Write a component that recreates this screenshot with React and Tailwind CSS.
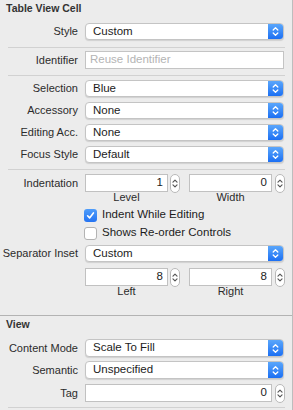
import React from 'react';

const Chevrons = ({ color = 'white', w = 9, h = 13 }) => (
  <svg width={w} height={h} viewBox="0 0 9 13" fill="none">
    <path d="M2.2 5 L4.5 2.7 L6.8 5" stroke={color} strokeWidth="1.3" strokeLinecap="round" strokeLinejoin="round" />
    <path d="M2.2 8 L4.5 10.3 L6.8 8" stroke={color} strokeWidth="1.3" strokeLinecap="round" strokeLinejoin="round" />
  </svg>
);

const Label = ({ children }) => (
  <div className="w-[79px] shrink-0 text-right text-[11px] text-[#2b2b2b] pr-[1px]">{children}</div>
);

const Popup = ({ label, value, h = 'h-[17px]', mt }) => (
  <div className={`flex items-center ${h} ${mt}`}>
    <Label>{label}</Label>
    <div className="ml-[6px] w-[199px] h-full flex bg-white rounded-[4px] border border-[#c4c4c4] shadow-[0_1px_1px_rgba(0,0,0,0.12)] overflow-hidden">
      <div className="flex-1 flex items-center pl-[7px] text-[11.5px] text-[#1c1c1c]">{value}</div>
      <div className="w-[15px] flex items-center justify-center bg-gradient-to-b from-[#5aa6fb] to-[#1b6ff3]">
        <Chevrons />
      </div>
    </div>
  </div>
);

const Stepper = () => (
  <div className="w-[10px] h-[19px] rounded-full border border-[#b9b9b9] bg-white flex items-center justify-center">
    <Chevrons color="#555" w={8} h={13} />
  </div>
);

const NumField = ({ value, w = 'w-[83px]' }) => (
  <div className={`${w} h-full bg-white border border-[#c1c1c1] flex items-center justify-end pr-[4px] text-[11.5px] text-[#1c1c1c]`}>
    {value}
  </div>
);

const Sep = ({ mt }) => <div className={`${mt} ml-[8px] w-[277px] h-px bg-[#d1d1d1]`} />;

const Check = ({ checked, text }) => (
  <div className="flex items-center h-[18px] pl-[84px]">
    {checked ? (
      <div className="w-[13px] h-[13px] rounded-[3px] bg-gradient-to-b from-[#4f9dfa] to-[#2473f2] flex items-center justify-center">
        <svg width="9" height="9" viewBox="0 0 9 9" fill="none">
          <path d="M1.6 4.8 L3.6 6.9 L7.4 1.9" stroke="white" strokeWidth="1.6" strokeLinecap="round" strokeLinejoin="round" />
        </svg>
      </div>
    ) : (
      <div className="w-[13px] h-[13px] rounded-[3px] bg-white border border-[#b3b3b3]" />
    )}
    <span className="ml-[5px] text-[11.5px] text-[#1c1c1c]">{text}</span>
  </div>
);

export default function App() {
  return (
    <div
      className="w-[293px] h-[410px] bg-[#ececec] overflow-hidden border-r border-[#bdbdbd] flex flex-col"
      style={{ fontFamily: '"Liberation Sans", Arial, sans-serif' }}
    >
      <div className="h-[18px] flex items-center pl-[6px] text-[10.5px] font-bold text-[#333]">Table View Cell</div>
      <Popup label="Style" value="Custom" mt="mt-[5px]" />
      <Sep mt="mt-[7px]" />

      <div className="flex items-center h-[18px] mt-[3px]">
        <Label>Identifier</Label>
        <div className="ml-[6px] w-[199px] h-full bg-white border border-[#c4c4c4] flex items-center pl-[4px] text-[11.5px] text-[#b4b4b4]">
          Reuse Identifier
        </div>
      </div>
      <Sep mt="mt-[6px]" />

      <Popup label="Selection" value="Blue" mt="mt-[4px]" />
      <Popup label="Accessory" value="None" mt="mt-[5px]" />
      <Popup label="Editing Acc." value="None" mt="mt-[5px]" />
      <Popup label="Focus Style" value="Default" mt="mt-[5px]" />
      <Sep mt="mt-[6px]" />

      <div className="flex items-center h-[18px] mt-[4px]">
        <Label>Indentation</Label>
        <div className="ml-[6px] flex items-center h-full">
          <NumField value="1" />
          <div className="ml-[2px]"><Stepper /></div>
          <div className="ml-[9px] h-full"><NumField value="0" /></div>
          <div className="ml-[3px]"><Stepper /></div>
        </div>
      </div>
      <div className="flex h-[11px] items-center text-[11px] text-[#2b2b2b]">
        <div className="ml-[85px] w-[83px] text-center">Level</div>
        <div className="ml-[21px] w-[83px] text-center">Width</div>
      </div>

      <div className="mt-[3px]">
        <Check checked text="Indent While Editing" />
        <Check text="Shows Re-order Controls" />
      </div>

      <Popup label="Separator Inset" value="Custom" mt="mt-[3px]" />
      <div className="flex items-center h-[18px] mt-[6px] pl-[85px]">
        <NumField value="8" />
        <div className="ml-[2px]"><Stepper /></div>
        <div className="ml-[9px] h-full"><NumField value="8" /></div>
        <div className="ml-[3px]"><Stepper /></div>
      </div>
      <div className="flex h-[11px] items-center text-[11px] text-[#2b2b2b]">
        <div className="ml-[85px] w-[83px] text-center">Left</div>
        <div className="ml-[21px] w-[83px] text-center">Right</div>
      </div>

      <div className="mt-[18px] w-full h-px bg-[#b3b3b3]" />
      <div className="h-[18px] flex items-center pl-[6px] text-[10.5px] font-bold text-[#333]">View</div>
      <Popup label="Content Mode" value="Scale To Fill" h="h-[18px]" mt="mt-[5px]" />
      <Popup label="Semantic" value="Unspecified" h="h-[18px]" mt="mt-[4px]" />
      <div className="flex items-center h-[18px] mt-[5px]">
        <Label>Tag</Label>
        <div className="ml-[6px] flex items-center h-full">
          <NumField value="0" w="w-[187px]" />
          <div className="ml-[3px]"><Stepper /></div>
        </div>
      </div>
      <Sep mt="mt-[5px]" />
    </div>
  );
}
